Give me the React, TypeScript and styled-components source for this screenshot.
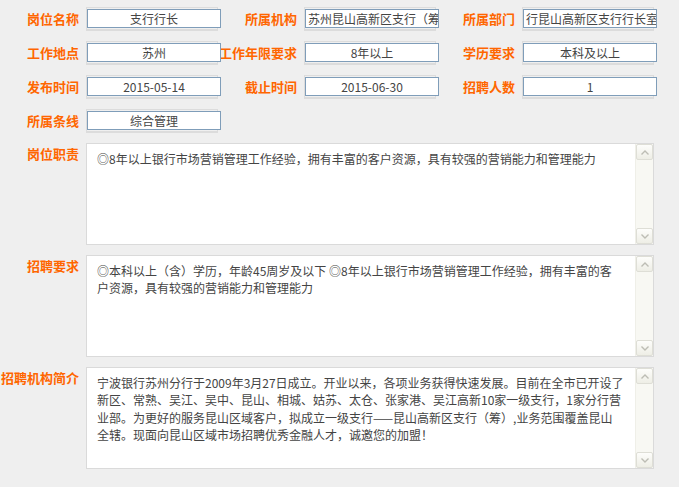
import { Fragment } from "react";
import styled, { createGlobalStyle } from "styled-components";

const GlobalStyle = createGlobalStyle`
  html {
    background: #efefef;
  }
  body {
    margin: 0;
    font-family: "Noto Sans CJK SC", "Liberation Sans", sans-serif;
  }
`;

interface FieldItem {
  label: string;
  value: string;
  left?: boolean;
}

const rows: FieldItem[][] = [
  [
    { label: "岗位名称", value: "支行行长" },
    { label: "所属机构", value: "苏州昆山高新区支行（筹", left: true },
    { label: "所属部门", value: "行昆山高新区支行行长室", left: true },
  ],
  [
    { label: "工作地点", value: "苏州" },
    { label: "工作年限要求", value: "8年以上" },
    { label: "学历要求", value: "本科及以上" },
  ],
  [
    { label: "发布时间", value: "2015-05-14" },
    { label: "截止时间", value: "2015-06-30" },
    { label: "招聘人数", value: "1" },
  ],
  [{ label: "所属条线", value: "综合管理" }],
];

const blocks = [
  {
    label: "岗位职责",
    lines: ["◎8年以上银行市场营销管理工作经验，拥有丰富的客户资源，具有较强的营销能力和管理能力"],
  },
  {
    label: "招聘要求",
    lines: [
      "◎本科以上（含）学历，年龄45周岁及以下  ◎8年以上银行市场营销管理工作经验，拥有丰富的客",
      "户资源，具有较强的营销能力和管理能力",
    ],
  },
  {
    label: "招聘机构简介",
    lines: [
      "宁波银行苏州分行于2009年3月27日成立。开业以来，各项业务获得快速发展。目前在全市已开设了",
      "新区、常熟、吴江、吴中、昆山、相城、姑苏、太仓、张家港、吴江高新10家一级支行，1家分行营",
      "业部。为更好的服务昆山区域客户，拟成立一级支行——昆山高新区支行（筹）,业务范围覆盖昆山",
      "全辖。现面向昆山区域市场招聘优秀金融人才，诚邀您的加盟！",
    ],
  },
];

function Chevron({ down }: { down?: boolean }) {
  return (
    <svg width="8" height="5" viewBox="0 0 8 5">
      <path
        d={down ? "M0.5 0.5 L4 4 L7.5 0.5" : "M0.5 4.5 L4 1 L7.5 4.5"}
        fill="none"
        stroke="#bdbdb4"
        strokeWidth="1.4"
      />
    </svg>
  );
}

function App() {
  return (
    <Page>
      <GlobalStyle />
      <FieldGrid>
        {rows.map((row) =>
          row.map((f) => (
            <Fragment key={f.label}>
              <Label>{f.label}</Label>
              <FieldCell>
                <Field $left={f.left}>{f.value}</Field>
              </FieldCell>
            </Fragment>
          ))
        )}
      </FieldGrid>

      <Blocks>
        {blocks.map((b) => (
          <BlockRow key={b.label}>
            <BlockLabel>{b.label}</BlockLabel>
            <TextBox>
              <TextContent>
                {b.lines.map((l, i) => (
                  <Line key={i}>{l}</Line>
                ))}
              </TextContent>
              <ScrollBar>
                <ScrollButton>
                  <Chevron />
                </ScrollButton>
                <ScrollButton>
                  <Chevron down />
                </ScrollButton>
              </ScrollBar>
            </TextBox>
          </BlockRow>
        ))}
      </Blocks>
    </Page>
  );
}

const Page = styled.div`
  width: 679px;
  padding-top: 9px;
`;

const FieldGrid = styled.div`
  display: grid;
  grid-template-columns: 87px 134px 84px 134px 84px 134px;
  grid-auto-rows: 19px;
  row-gap: 15px;
`;

const Label = styled.div`
  display: flex;
  justify-content: flex-end;
  align-items: center;
  padding-right: 8px;
  color: #ff6600;
  font-weight: bold;
  font-size: 13px;
  white-space: nowrap;
`;

const FieldCell = styled.div`
  position: relative;
  z-index: 0;

  &::before {
    content: "";
    position: absolute;
    left: -1px;
    top: -2px;
    width: 132px;
    height: 24px;
    box-sizing: border-box;
    border: 1px solid #dcdcdc;
    border-bottom-width: 2px;
    z-index: -1;
  }
`;

const Field = styled.div<{ $left?: boolean }>`
  height: 19px;
  box-sizing: border-box;
  border: 1px solid #7f9db9;
  background: #ffffff;
  padding: 0 2px;
  font-size: 12px;
  line-height: 17px;
  color: #444444;
  text-align: ${(p) => (p.$left ? "left" : "center")};
  white-space: nowrap;
  overflow: hidden;
`;

const Blocks = styled.div`
  display: flex;
  flex-direction: column;
  gap: 10px;
  margin-top: 13px;
`;

const BlockRow = styled.div`
  display: grid;
  grid-template-columns: 86px 568px;
  height: 102px;
`;

const BlockLabel = styled.div`
  text-align: right;
  padding: 3px 7px 0 0;
  line-height: 16px;
  color: #ff6600;
  font-weight: bold;
  font-size: 13px;
  white-space: nowrap;
`;

const TextBox = styled.div`
  display: flex;
  box-sizing: border-box;
  border: 1px solid #dadada;
  background: #ffffff;
`;

const TextContent = styled.div`
  flex: 1;
  padding: 6px 0 0 10px;
  font-size: 12px;
  line-height: 17.4px;
  color: #444444;
`;

const Line = styled.div`
  white-space: nowrap;
`;

const ScrollBar = styled.div`
  width: 17px;
  display: flex;
  flex-direction: column;
  justify-content: space-between;
  background: #f8f8f3;
  border-left: 1px solid #efefe8;
`;

const ScrollButton = styled.div`
  height: 16px;
  box-sizing: border-box;
  display: flex;
  align-items: center;
  justify-content: center;
  border: 1px solid #deded6;
  border-radius: 2px;
  background: linear-gradient(#fdfdfb, #eeeee6);
`;

export default App;
